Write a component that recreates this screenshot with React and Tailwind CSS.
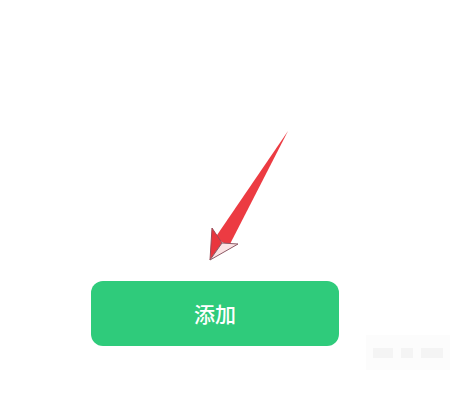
export default function App() {
  return (
    <div className="relative w-[470px] h-[401px] overflow-hidden bg-white font-['Noto_Sans_CJK_SC',sans-serif]">
      {/* arrow pointing at the button */}
      <svg className="block" width="470" height="281" viewBox="0 0 470 281">
        <polygon points="288,131 229,246 215,238" fill="#ec3b42" />
        <polygon points="212,228 222,243 210,260" fill="#e9363e" stroke="#9a4b58" strokeWidth="1" strokeLinejoin="round" />
        <polygon points="222,243 238,244 210,260" fill="#fbe3e4" stroke="#8d5a66" strokeWidth="1" strokeLinejoin="round" />
      </svg>

      <button className="ml-[91px] flex h-[65px] w-[248px] items-center justify-center rounded-[12px] bg-[#2fcb7b] text-[21px] font-medium text-white">
        添加
      </button>

      {/* faint watermark */}
      <div className="absolute left-[366px] top-[335px] flex h-[35px] w-[84px] items-center justify-center gap-2 bg-[#fcfcfc]">
        <div className="h-[10px] w-[20px] bg-[#f4f4f4]" />
        <div className="h-[10px] w-[12px] bg-[#f4f4f4]" />
        <div className="h-[10px] w-[22px] bg-[#f4f4f4]" />
      </div>
    </div>
  );
}
